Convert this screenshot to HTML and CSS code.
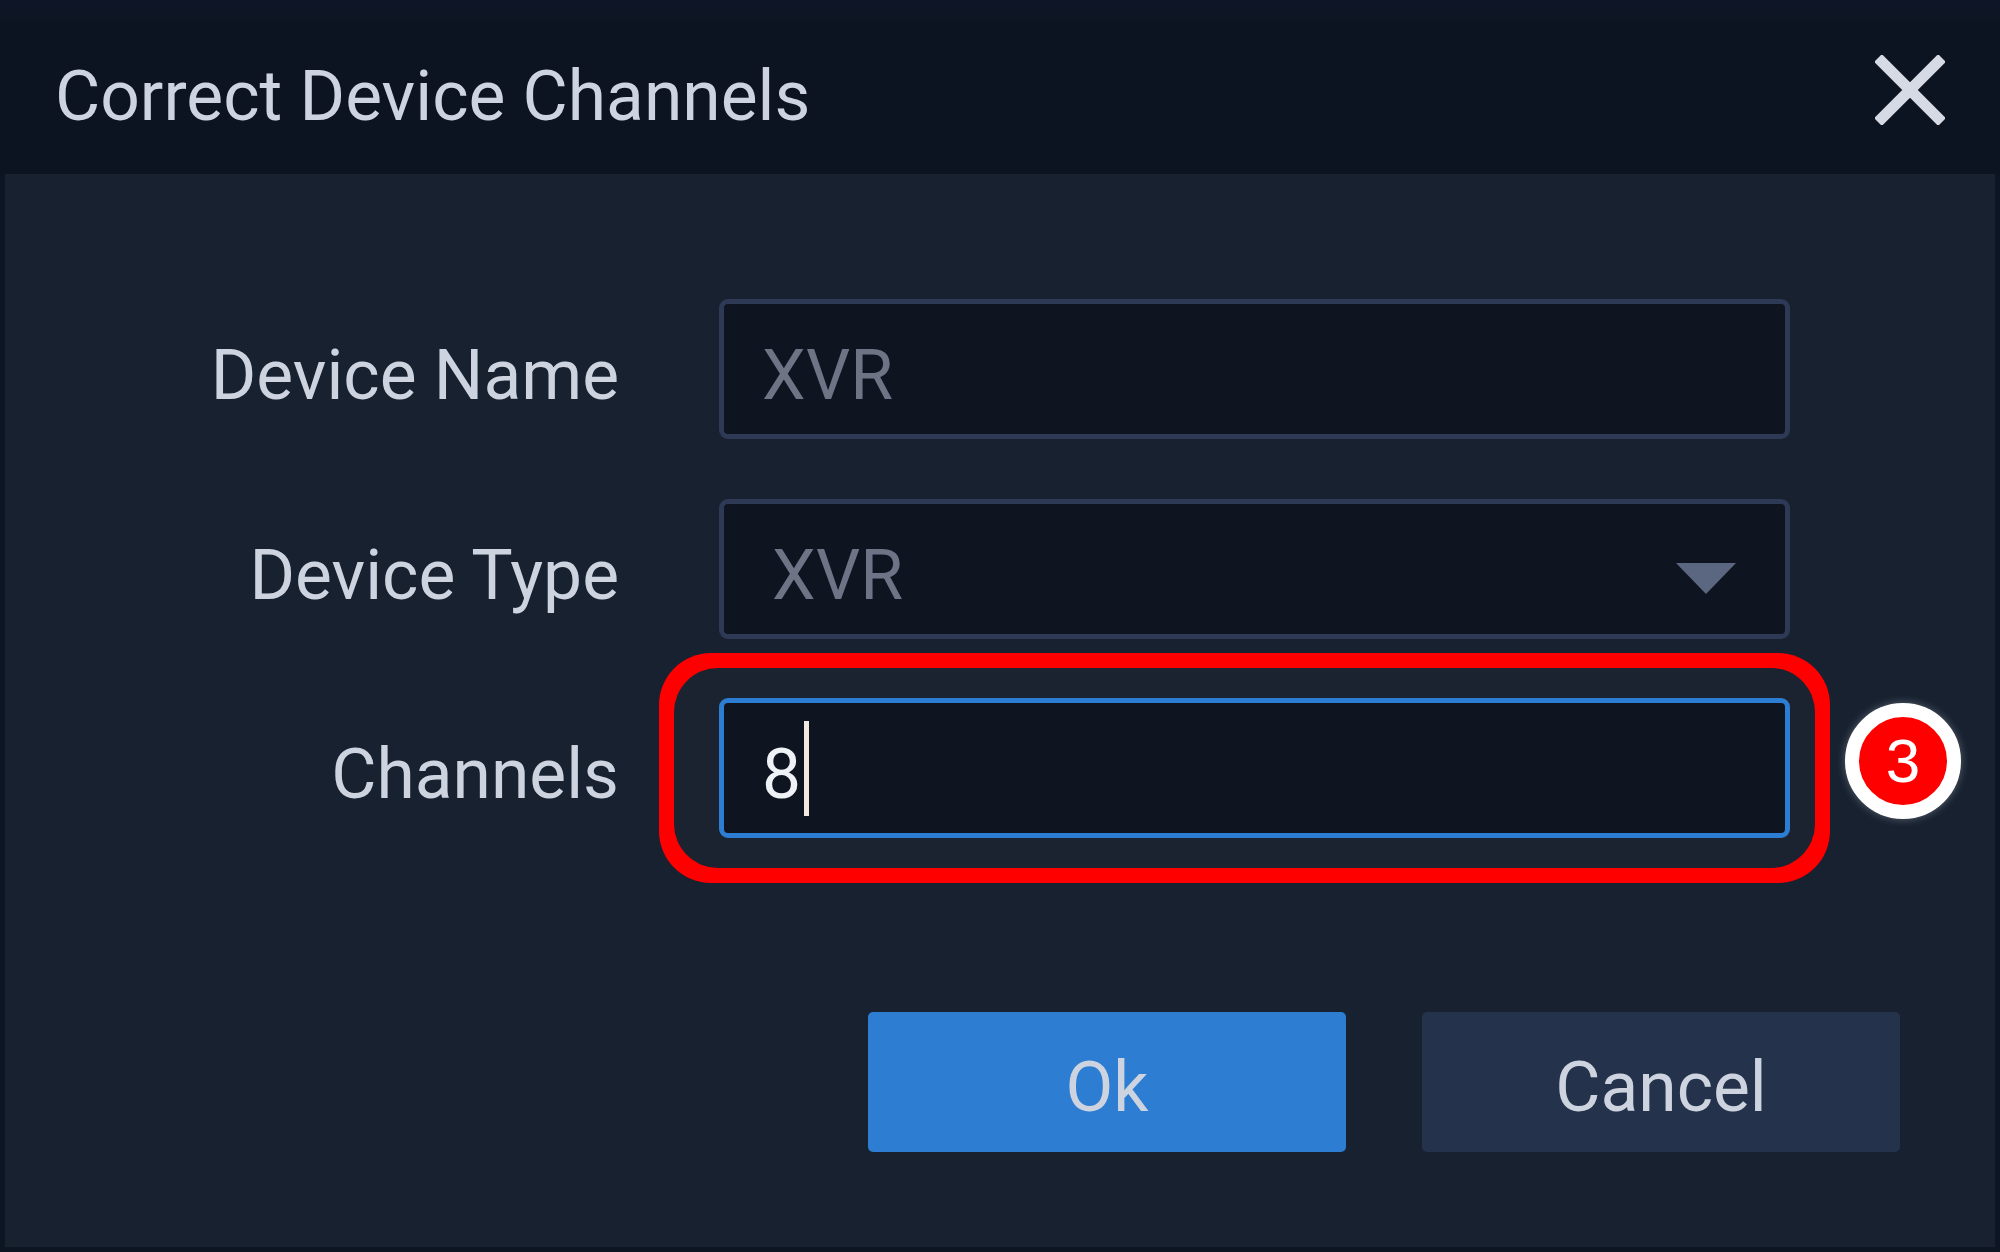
FILE: index.html
```html
<!DOCTYPE html>
<html lang="en">
<head>
<meta charset="utf-8">
<title>Correct Device Channels</title>
<link rel="stylesheet" href="styles.css">
</head>
<body>
<div class="dialog">
  <header class="header">
    <h1 class="title">Correct Device Channels</h1>
    <svg class="close" viewBox="0 0 70 70" aria-label="Close"><path d="M3 3 L67 67 M67 3 L3 67"/></svg>
  </header>
  <main class="panel">
    <form class="form">
      <div class="row">
        <span class="label">Device Name</span>
        <div class="field field-disabled"><span class="value">XVR</span></div>
      </div>
      <div class="row">
        <span class="label">Device Type</span>
        <div class="field field-select"><span class="value">XVR</span><span class="arrow"></span></div>
      </div>
      <div class="row row-highlight">
        <span class="label">Channels</span>
        <div class="field field-focus"><span class="value value-active">8</span><span class="caret"></span></div>
        <span class="ring"></span>
        <span class="badge">3</span>
      </div>
    </form>
    <div class="actions">
      <button class="btn btn-primary" type="button">Ok</button>
      <button class="btn btn-secondary" type="button">Cancel</button>
    </div>
  </main>
</div>
</body>
</html>
```
FILE: styles.css
```css
* { box-sizing: border-box; }
html, body { margin: 0; height: 100%; }
body {
  width: 2000px;
  height: 1252px;
  overflow: hidden;
  background: #0d1422;
  font-family: Roboto, "Liberation Sans", sans-serif;
  font-weight: 400;
  font-size: 69.5px;
  color: #cdd4e0;
}
.dialog { display: flex; flex-direction: column; height: 1252px; }
.header {
  height: 174px;
  flex: none;
  display: flex;
  align-items: flex-start;
  justify-content: space-between;
  padding: 55px 55px 0 55px;
  background: linear-gradient(#0e1527 0, #0d1421 24px);
}
.title { margin: 0; font: inherit; line-height: 70px; height: 70px; position: relative; top: 7px; }
.close { width: 70px; height: 70px; display: block; }
.close path { fill: none; stroke: #d5dae5; stroke-width: 11; stroke-linecap: butt; }
.panel {
  flex: 1;
  margin: 0 5px 5px;
  padding-top: 125px;
  background: #172130;
}
.form { display: flex; flex-direction: column; gap: 59.5px; }
.row { position: relative; display: flex; align-items: center; height: 140px; gap: 100px; }
.label {
  width: 614px;
  flex: none;
  text-align: right;
  line-height: 70px;
  position: relative;
  top: 7px;
}
.field {
  width: 1071px;
  height: 140px;
  flex: none;
  display: flex;
  align-items: center;
  padding-left: 38px;
  background: #0f1520;
  border: 5px solid #2e3a55;
  border-radius: 9px;
}
.field-select { padding-left: 48px; justify-content: space-between; padding-right: 49px; }
.field-focus { border-color: #2d7dd2; }
.value { line-height: 70px; position: relative; top: 7px; color: #6c7486; }
.value-active { color: #eef2f7; }
.arrow {
  width: 0; height: 0;
  position: relative; top: 10px;
  border-left: 30px solid transparent;
  border-right: 30px solid transparent;
  border-top: 31px solid #5b6780;
}
.caret { width: 5px; height: 95px; margin-left: 3px; background: #f3e9e0; }
.ring {
  position: absolute;
  left: 654px;
  top: -45px;
  width: 1171px;
  height: 230px;
  border-radius: 52px;
  background: #ff0000;
  z-index: 0;
  pointer-events: none;
}
.ring::before {
  content: "";
  position: absolute;
  inset: 15px;
  border-radius: 44px;
  background: #1b2331;
}
.row-highlight .label, .row-highlight .field { z-index: 1; }
.badge {
  position: absolute;
  left: 1840px;
  top: 5px;
  width: 116px;
  height: 116px;
  border: 14px solid #fff;
  border-radius: 50%;
  background: #ff0000;
  color: #fff;
  box-shadow: 0 0 8px rgba(255,255,255,.3);
  font-family: "Liberation Sans", sans-serif;
  font-weight: 400;
  font-size: 62px;
  line-height: 88px;
  text-align: center;
}
.actions { display: flex; justify-content: flex-end; gap: 76px; margin-top: 174px; padding-right: 95px; }
.btn {
  width: 478px;
  height: 140px;
  padding: 12px 0 0;
  border: 0;
  border-radius: 5px;
  font: inherit;
  line-height: 70px;
  color: #cdd4e0;
}
.btn-primary { background: #2d7dd2; }
.btn-secondary { background: #24324c; }
```
